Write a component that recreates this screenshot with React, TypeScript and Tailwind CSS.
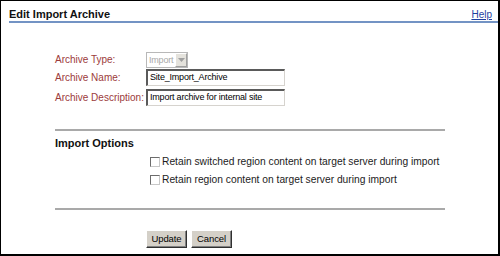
import { useState } from "react";

const labelCls = "w-[91px] shrink-0 text-[10px] leading-[12px] text-[#9c3b3b] whitespace-nowrap";

const TextBox = ({ value }: { value: string }) => (
  <div className="w-[139px] h-[17px] bg-white border-t-2 border-l-2 border-t-[#5a5a5a] border-l-[#5a5a5a] border-r border-b border-r-[#d6d3ce] border-b-[#d6d3ce] flex items-center pl-[2px] text-[9px] tracking-[-0.2px] text-black whitespace-nowrap overflow-hidden">
    {value}
  </div>
);

const Check = ({ label }: { label: string }) => {
  const [on, setOn] = useState(false);
  return (
    <label className="flex items-center h-[18px] ml-[95px] gap-[2px] cursor-pointer" onClick={() => setOn(!on)}>
      <span className="w-[10px] h-[10px] shrink-0 bg-white border border-t-[#6c6c6c] border-l-[#6c6c6c] border-r-[#c8c8c8] border-b-[#c8c8c8] flex items-center justify-center text-[8px] leading-none">
        {on ? "✓" : ""}
      </span>
      <span className="text-[10.25px] leading-[12px] text-[#1c1c1c] whitespace-nowrap">{label}</span>
    </label>
  );
};

const Btn = ({ label }: { label: string }) => (
  <button className="h-[18px] w-[41px] bg-[#d4d0c8] border border-t-white border-l-white border-r-[#303030] border-b-[#303030] shadow-[inset_-1px_-1px_0_#808080] text-[9.5px] tracking-[-0.1px] leading-[12px] text-black">
    {label}
  </button>
);

export default function App() {
  return (
    <div className="w-[500px] h-[256px] bg-white border-t border-l border-r-2 border-b-2 border-black font-['Liberation_Sans',Arial,sans-serif] overflow-hidden">
      {/* Header */}
      <div className="ml-[8px] h-[22px] border-b-2 border-[#7393c4] flex items-end justify-between pr-[6px]">
        <span className="text-[11px] leading-[13px] font-bold text-[#111]">Edit Import Archive</span>
        <a href="#" className="text-[10px] leading-[12px] text-[#1f3f9f] underline">Help</a>
      </div>

      <div className="ml-[54px] w-[390px]">
        {/* Archive fields */}
        <div className="mt-[29px] flex items-center h-[16px]">
          <span className={labelCls}>Archive Type:</span>
          <div className="w-[42px] h-[16px] flex border border-[#b8b8b8] bg-white">
            <span className="flex-1 text-[9px] tracking-[-0.2px] leading-[14px] text-[#a8a8a8] pl-[2px]">Import</span>
            <span className="w-[12px] h-[14px] bg-[#e4e2dc] border border-t-white border-l-white border-r-[#a0a0a0] border-b-[#a0a0a0] flex items-center justify-center">
              <svg width="7" height="4" viewBox="0 0 7 4">
                <path d="M0 0h7L3.5 4z" fill="#a0a0a0" />
              </svg>
            </span>
          </div>
        </div>
        <div className="mt-[1px] flex items-center h-[17px]">
          <span className={labelCls}>Archive Name:</span>
          <TextBox value="Site_Import_Archive" />
        </div>
        <div className="mt-[3px] flex items-center h-[17px]">
          <span className={labelCls}>Archive Description:</span>
          <TextBox value="Import archive for internal site" />
        </div>

        <div className="mt-[23px] h-[2px] bg-[#a9a9a9]" />

        {/* Import options */}
        <div className="mt-[6px] text-[11px] leading-[13px] font-bold text-[#111]">Import Options</div>
        <div className="mt-[3px]">
          <Check label="Retain switched region content on target server during import" />
          <Check label="Retain region content on target server during import" />
        </div>

        <div className="mt-[19px] h-[2px] bg-[#a9a9a9]" />

        <div className="mt-[20px] ml-[91px] flex gap-[4px]">
          <Btn label="Update" />
          <Btn label="Cancel" />
        </div>
      </div>
    </div>
  );
}
